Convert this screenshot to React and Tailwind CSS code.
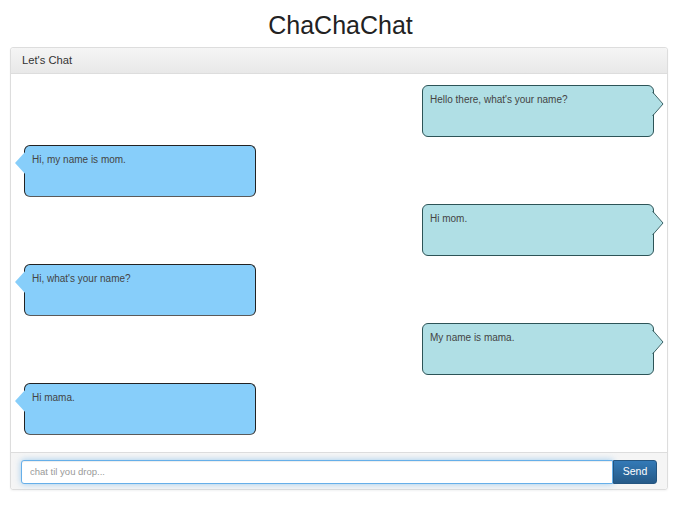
import React from 'react';

const messages = [
  { side: 'right', text: "Hello there, what's your name?" },
  { side: 'left', text: 'Hi, my name is mom.' },
  { side: 'right', text: 'Hi mom.' },
  { side: 'left', text: "Hi, what's your name?" },
  { side: 'right', text: 'My name is mama.' },
  { side: 'left', text: 'Hi mama.' },
];

function Bubble({ side, text }) {
  if (side === 'right') {
    return (
      <div className="flex justify-end pr-[13px]">
        <div className="relative w-[232px] h-[52px] rounded-[6px] border border-[#2d5457] bg-[#b0dfe5] px-[7px] pt-[7px] text-[10px] leading-[14px] text-[#444]">
          {text}
          <svg className="absolute top-[6px] right-[-11px]" width="12" height="24" viewBox="0 0 12 24">
            <polygon points="0,0 11,12 0,24" fill="#b0dfe5" />
            <polyline points="0.5,0 11,12 0.5,24" fill="none" stroke="#3c6467" strokeWidth="1" />
          </svg>
        </div>
      </div>
    );
  }
  return (
    <div className="flex justify-start pl-[13px]">
      <div className="relative w-[232px] h-[52px] rounded-[6px] border border-[#222] border-b-[#5a5a5a] bg-[#87cefa] px-[7px] pt-[7px] text-[10px] leading-[14px] text-[#444]">
        {text}
        <svg className="absolute top-[5px] left-[-11px]" width="12" height="24" viewBox="0 0 12 24">
          <polygon points="12,0 1,12 12,24" fill="#87cefa" />
        </svg>
      </div>
    </div>
  );
}

export default function App() {
  return (
    <div className="w-[681px] h-[506px] bg-white text-[11.2px] text-[#333]" style={{ fontFamily: '"Liberation Sans", Arial, sans-serif' }}>
      <div className="h-[47px] flex items-center justify-center pt-[4px]">
        <h1 className="text-[25px] leading-none text-[#222]">ChaChaChat</h1>
      </div>

      <div className="mx-[10px] w-[658px] border border-[#ddd] rounded-[3px] shadow-[0_1px_2px_rgba(0,0,0,0.05)]">
        <div className="h-[26px] flex items-center px-[11px] border-b border-[#ddd] bg-gradient-to-b from-[#f5f5f5] to-[#e8e8e8] text-[#333] rounded-t-[3px]">
          Let's Chat
        </div>

        <div className="pt-[11px] pb-[17px] flex flex-col gap-[7.5px]">
          {messages.map((m, i) => (
            <Bubble key={i} side={m.side} text={m.text} />
          ))}
        </div>

        <div className="border-t border-[#ddd] bg-[#f5f5f5] px-[10px] pt-[7px] pb-[5px] flex rounded-b-[3px]">
          <input
            type="text"
            placeholder="chat til you drop..."
            className="flex-1 h-[24px] border border-[#66afe9] rounded-l-[3px] px-[8px] text-[9.5px] placeholder-[#999] bg-white outline-none shadow-[inset_0_1px_1px_rgba(0,0,0,0.075),0_0_6px_rgba(102,175,233,0.6)]"
          />
          <button className="w-[44px] h-[24px] rounded-r-[3px] border border-[#245580] bg-gradient-to-b from-[#337ab7] to-[#265a88] text-white text-[10.5px]">
            Send
          </button>
        </div>
      </div>
    </div>
  );
}
